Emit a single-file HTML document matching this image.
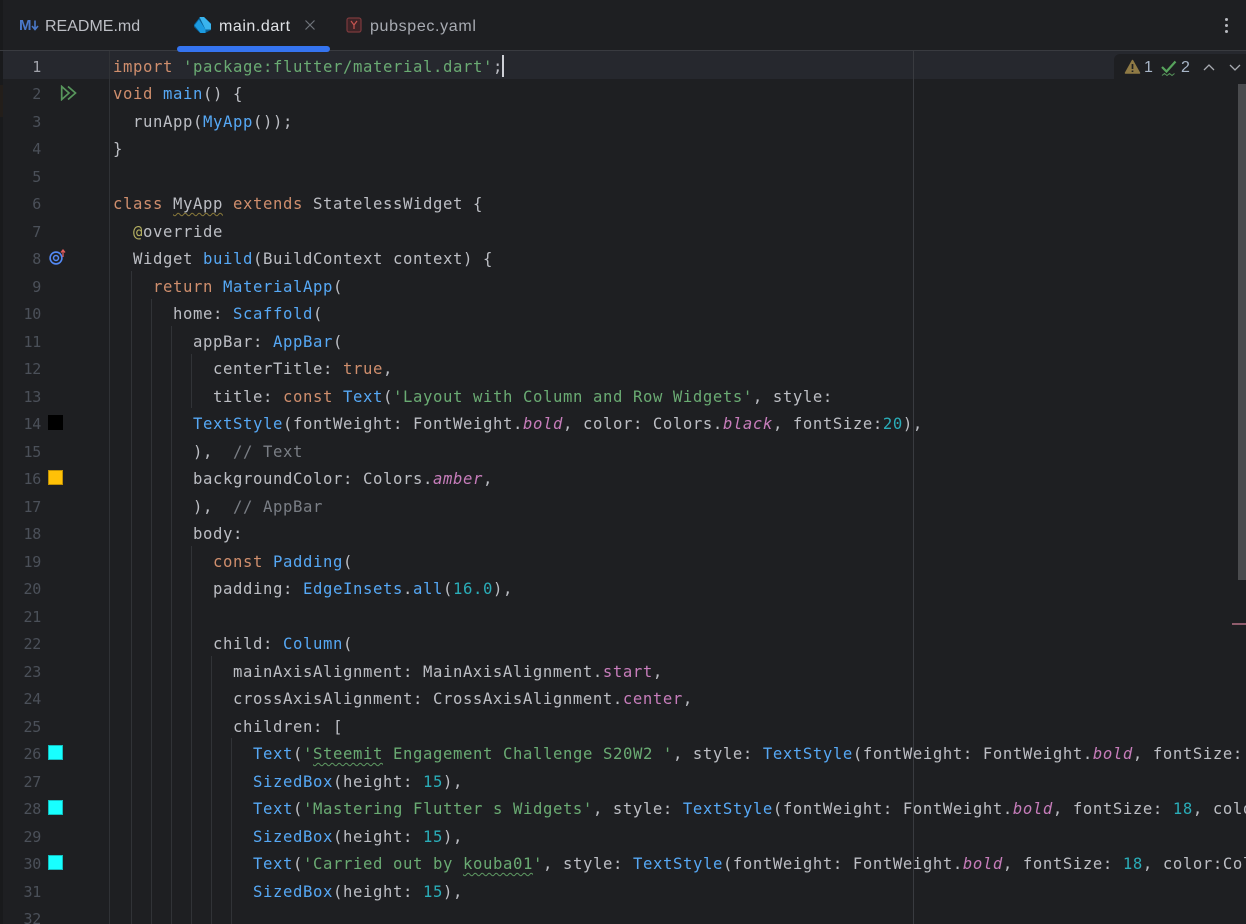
<!DOCTYPE html>
<html><head><meta charset="utf-8">
<style>
html,body{margin:0;padding:0;background:#1e1f22;width:1246px;height:924px;overflow:hidden;}
#r{width:1246px;height:924px;position:relative;overflow:hidden;}
.abs{position:absolute}
.tab{position:absolute;top:17px;font:16px/20px "Liberation Sans",sans-serif;white-space:pre;}
.l{position:absolute;left:113px;margin-top:1px;height:27px;line-height:27px;font-family:"DejaVu Sans Mono",monospace;font-size:15.6px;letter-spacing:.61px;white-space:pre;color:#bcbec4;}
.n{position:absolute;left:0;margin-top:1px;width:41px;text-align:right;height:27px;line-height:27px;font-family:"DejaVu Sans Mono",monospace;font-size:15px;letter-spacing:-.3px;color:#4b5059;}
.g{position:absolute;width:1px;background:#313337}
.k{color:#cf8e6d}.s{color:#6aab73}.b{color:#56a8f5}.c{color:#7a7e85}.d{color:#2aacb8}
.i{color:#c77dbb;font-style:italic}.a{color:#b3ae60}
.w{text-decoration:underline wavy #8a7a3a 1px;text-underline-offset:3px}
.wg{text-decoration:underline wavy #5f9a63 1px;text-underline-offset:3px}
.sw{position:absolute;left:48px;width:15px;height:15px;box-sizing:border-box;border:1px solid rgba(0,0,0,.25)}
</style></head>
<body>
<div id="r">
<div class="abs" style="left:0;top:0;width:3px;height:924px;background:#191a1c"></div>
<div class="abs" style="left:0;top:85px;width:3px;height:32px;background:#231e1a"></div>
<div class="abs" style="left:0;top:50px;width:1246px;height:1px;background:#393b40"></div>
<div class="abs" style="left:3px;top:51px;width:1243px;height:28px;background:#26282e"></div>
<div class="abs" style="left:177px;top:46px;width:153px;height:6px;border-radius:3px;background:#3574f0"></div>

<div class="abs" style="left:19px;top:17px;font:bold 15px/18px 'Liberation Sans',sans-serif;color:#4a78c8">M</div>
<svg class="abs" style="left:31px;top:20px" width="8" height="11" viewBox="0 0 8 11"><path d="M4 0.5 V9 M1 6 L4 9.5 L7 6" fill="none" stroke="#4a78c8" stroke-width="1.6"/></svg>
<div class="tab" style="left:45px;color:#bcbec4">README.md</div>
<svg class="abs" style="left:193px;top:16px" width="19" height="19" viewBox="0 0 19 19"><path d="M1 8.5 L7 1 H11 L18 7.5 V14 L12 17 H7 L1 11Z" fill="#0a5f94"/><path d="M6.5 1 H11 L18 8 V13.5 H12.5 Z" fill="#39b4ee"/><path d="M1.5 9.5 L6 3.5 L12.5 13.5 V17 H7.5 Z" fill="#1c9be0"/></svg>
<div class="tab" style="left:219px;color:#dfe1e5;letter-spacing:.55px">main.dart</div>
<svg class="abs" style="left:304px;top:19px" width="12" height="12" viewBox="0 0 12 12"><path d="M1.5 1.5 L10.5 10.5 M10.5 1.5 L1.5 10.5" stroke="#6f737a" stroke-width="1.2"/></svg>
<svg class="abs" style="left:346px;top:17px" width="16" height="16" viewBox="0 0 16 16"><rect x="1" y="1" width="14" height="14" rx="2" fill="#3d2326" stroke="#7d3a3d" stroke-width="1.2"/><path d="M5 4 L8 8 L11 4 M8 8 V12" fill="none" stroke="#c75450" stroke-width="1.2"/></svg>
<div class="tab" style="left:370px;color:#a8abb2;letter-spacing:.65px">pubspec.yaml</div>
<div class="abs" style="left:1225px;top:18px;width:3px;height:3px;background:#b8bac0;border-radius:2px"></div>
<div class="abs" style="left:1225px;top:24px;width:3px;height:3px;background:#b8bac0;border-radius:2px"></div>
<div class="abs" style="left:1225px;top:30px;width:3px;height:3px;background:#b8bac0;border-radius:2px"></div>

<div class="abs" style="left:109px;top:51px;width:1px;height:873px;background:#303236"></div>
<div class="g" style="left:131px;top:271px;height:653px"></div>
<div class="g" style="left:151px;top:299px;height:625px"></div>
<div class="g" style="left:171px;top:326px;height:598px"></div>
<div class="g" style="left:191px;top:354px;height:54px"></div>
<div class="g" style="left:191px;top:546px;height:378px"></div>
<div class="g" style="left:211px;top:656px;height:268px"></div>
<div class="g" style="left:231px;top:738px;height:186px"></div>
<div class="abs" style="left:913px;top:51px;width:1px;height:873px;background:#393b40"></div>

<div class="n" style="top:53px;color:#a1a3ab">1</div>
<div class="n" style="top:80px">2</div>
<div class="n" style="top:108px">3</div>
<div class="n" style="top:135px">4</div>
<div class="n" style="top:163px">5</div>
<div class="n" style="top:190px">6</div>
<div class="n" style="top:218px">7</div>
<div class="n" style="top:245px">8</div>
<div class="n" style="top:273px">9</div>
<div class="n" style="top:300px">10</div>
<div class="n" style="top:328px">11</div>
<div class="n" style="top:355px">12</div>
<div class="n" style="top:383px">13</div>
<div class="n" style="top:410px">14</div>
<div class="n" style="top:438px">15</div>
<div class="n" style="top:465px">16</div>
<div class="n" style="top:493px">17</div>
<div class="n" style="top:520px">18</div>
<div class="n" style="top:548px">19</div>
<div class="n" style="top:575px">20</div>
<div class="n" style="top:603px">21</div>
<div class="n" style="top:630px">22</div>
<div class="n" style="top:658px">23</div>
<div class="n" style="top:685px">24</div>
<div class="n" style="top:713px">25</div>
<div class="n" style="top:740px">26</div>
<div class="n" style="top:768px">27</div>
<div class="n" style="top:795px">28</div>
<div class="n" style="top:823px">29</div>
<div class="n" style="top:850px">30</div>
<div class="n" style="top:878px">31</div>
<div class="n" style="top:905px">32</div>

<svg class="abs" style="left:60px;top:85px" width="18" height="16" viewBox="0 0 18 16"><path d="M1.7 1.5 L9 8 L1.7 14.5 Z" fill="none" stroke="#57965c" stroke-width="1.7"/><path d="M8 1.5 L15.5 8 L8 14.5" fill="none" stroke="#57965c" stroke-width="1.7"/></svg>
<svg class="abs" style="left:49px;top:249px" width="18" height="17" viewBox="0 0 18 17"><circle cx="7" cy="9" r="5.9" fill="none" stroke="#548af7" stroke-width="1.6"/><circle cx="7" cy="9" r="2.5" fill="none" stroke="#548af7" stroke-width="1.5"/><path d="M14 8 V1.5 M12 3.5 L14 1 L16 3.5" fill="none" stroke="#e05c5c" stroke-width="1.3"/></svg>
<div class="sw" style="top:415px;background:#000"></div>
<div class="sw" style="top:470px;background:#ffc107"></div>
<div class="sw" style="top:745px;background:#18ffff"></div>
<div class="sw" style="top:800px;background:#18ffff"></div>
<div class="sw" style="top:855px;background:#18ffff"></div>

<div class="l" style="top:53px"><span class="k">import</span> <span class="s">'package:flutter/material.dart'</span>;</div>
<div class="abs" style="left:502px;top:55px;width:2px;height:22px;background:#ced0d6"></div>
<div class="l" style="top:80px"><span class="k">void</span> <span class="b">main</span>() {</div>
<div class="l" style="top:108px">  runApp(<span class="b">MyApp</span>());</div>
<div class="l" style="top:135px">}</div>
<div class="l" style="top:190px"><span class="k">class</span> <span class="w">MyApp</span> <span class="k">extends</span> StatelessWidget {</div>
<div class="l" style="top:218px">  <span class="a">@</span>override</div>
<div class="l" style="top:245px">  Widget <span class="b">build</span>(BuildContext context) {</div>
<div class="l" style="top:273px">    <span class="k">return</span> <span class="b">MaterialApp</span>(</div>
<div class="l" style="top:300px">      home: <span class="b">Scaffold</span>(</div>
<div class="l" style="top:328px">        appBar: <span class="b">AppBar</span>(</div>
<div class="l" style="top:355px">          centerTitle: <span class="k">true</span>,</div>
<div class="l" style="top:383px">          title: <span class="k">const</span> <span class="b">Text</span>(<span class="s">'Layout with Column and Row Widgets'</span>, style:</div>
<div class="l" style="top:410px">        <span class="b">TextStyle</span>(fontWeight: FontWeight.<span class="i">bold</span>, color: Colors.<span class="i">black</span>, fontSize:<span class="d">20</span>),</div>
<div class="l" style="top:438px">        ),  <span class="c">// Text</span></div>
<div class="l" style="top:465px">        backgroundColor: Colors.<span class="i">amber</span>,</div>
<div class="l" style="top:493px">        ),  <span class="c">// AppBar</span></div>
<div class="l" style="top:520px">        body:</div>
<div class="l" style="top:548px">          <span class="k">const</span> <span class="b">Padding</span>(</div>
<div class="l" style="top:575px">          padding: <span class="b">EdgeInsets</span>.<span class="b">all</span>(<span class="d">16.0</span>),</div>
<div class="l" style="top:630px">          child: <span class="b">Column</span>(</div>
<div class="l" style="top:658px">            mainAxisAlignment: MainAxisAlignment.<span class="i" style="font-style:normal">start</span>,</div>
<div class="l" style="top:685px">            crossAxisAlignment: CrossAxisAlignment.<span class="i" style="font-style:normal">center</span>,</div>
<div class="l" style="top:713px">            children: [</div>
<div class="l" style="top:740px">              <span class="b">Text</span>(<span class="s">'<span class="wg">Steemit</span> Engagement Challenge S20W2 '</span>, style: <span class="b">TextStyle</span>(fontWeight: FontWeight.<span class="i">bold</span>, fontSize: </div>
<div class="l" style="top:768px">              <span class="b">SizedBox</span>(height: <span class="d">15</span>),</div>
<div class="l" style="top:795px">              <span class="b">Text</span>(<span class="s">'Mastering Flutter s Widgets'</span>, style: <span class="b">TextStyle</span>(fontWeight: FontWeight.<span class="i">bold</span>, fontSize: <span class="d">18</span>, colo</div>
<div class="l" style="top:823px">              <span class="b">SizedBox</span>(height: <span class="d">15</span>),</div>
<div class="l" style="top:850px">              <span class="b">Text</span>(<span class="s">'Carried out by <span class="wg">kouba01</span>'</span>, style: <span class="b">TextStyle</span>(fontWeight: FontWeight.<span class="i">bold</span>, fontSize: <span class="d">18</span>, color:Col</div>
<div class="l" style="top:878px">              <span class="b">SizedBox</span>(height: <span class="d">15</span>),</div>

<div class="abs" style="left:1114px;top:54px;width:132px;height:25px;background:#1e1f22;border-radius:6px 0 0 0"></div>
<svg class="abs" style="left:1124px;top:59px" width="17" height="16" viewBox="0 0 17 16"><path d="M8.5 1.5 L15.5 14 H1.5 Z" fill="#8f7a45" stroke="#8f7a45" stroke-width="1.5" stroke-linejoin="round"/><path d="M8.5 5 V10 M8.5 11.5 V13" stroke="#1e1f22" stroke-width="1.7"/></svg>
<div class="abs" style="left:1144px;top:58px;font:16px/20px 'Liberation Sans',sans-serif;color:#a8b6c8">1</div>
<svg class="abs" style="left:1161px;top:60px" width="16" height="18" viewBox="0 0 16 18"><path d="M1 7 L5.5 11.5 L14.5 1.5" fill="none" stroke="#57a35c" stroke-width="2.2"/><path d="M1 15.5 L3.5 13.5 L6 15.5 L8.5 13.5 L11 15.5 L13.5 13.5" fill="none" stroke="#57965c" stroke-width="1"/></svg>
<div class="abs" style="left:1181px;top:58px;font:16px/20px 'Liberation Sans',sans-serif;color:#a8b6c8">2</div>
<svg class="abs" style="left:1203px;top:63px" width="12" height="9" viewBox="0 0 12 9"><path d="M1 7 L6 2 L11 7" fill="none" stroke="#a8abb2" stroke-width="1.3"/></svg>
<svg class="abs" style="left:1229px;top:63px" width="12" height="9" viewBox="0 0 12 9"><path d="M1 2 L6 7 L11 2" fill="none" stroke="#a8abb2" stroke-width="1.3"/></svg>

<div class="abs" style="left:1238px;top:84px;width:8px;height:496px;background:#4a4b4e"></div>
<div class="abs" style="left:1232px;top:623px;width:14px;height:2px;background:#8f5c6c"></div>
</div>
</body></html>
